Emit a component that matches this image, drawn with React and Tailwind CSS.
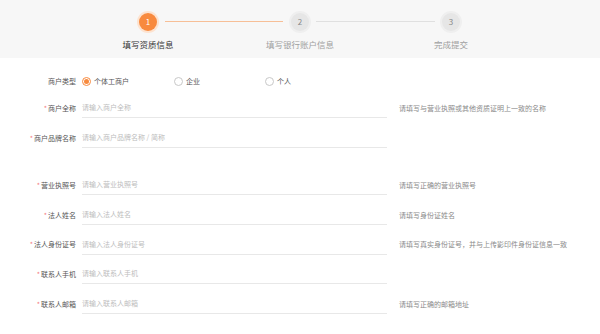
import React from "react";

const font = { fontFamily: '"Noto Sans CJK SC", "Noto Sans", sans-serif' };

function Step({ n, label, active }) {
  return (
    <div className="flex w-[22px] flex-col items-center">
      <div
        className={
          "flex h-[22px] w-[22px] items-center justify-center rounded-full " +
          (active ? "bg-[#fde3d0]" : "bg-[#efefef]")
        }
      >
        <div
          className={
            "flex h-[18px] w-[18px] items-center justify-center rounded-full text-[8px] " +
            (active ? "bg-[#f88a3e] text-white" : "bg-[#e6e6e6] text-[#888]")
          }
        >
          {n}
        </div>
      </div>
      <div
        className={
          "mt-[5px] whitespace-nowrap text-[8.5px] leading-[12px] " +
          (active ? "text-[#333]" : "text-[#a0a0a0]")
        }
      >
        {label}
      </div>
    </div>
  );
}

function Row({ label, required, placeholder, hint, h = "h-[30px]" }) {
  return (
    <div className={"flex items-center " + h}>
      <div className="w-[76px] text-right text-[7px] text-[#555]">
        {required && <span className="mr-[1px] text-[#f47c7c]">*</span>}
        {label}
      </div>
      <div className="ml-[6px] flex h-[20px] w-[305px] items-center border-b border-[#e8e8e8] text-[7px] text-[#bdbdbd]">
        {placeholder}
      </div>
      <div className="ml-[12px] text-[7px] text-[#8a8a8a]">{hint}</div>
    </div>
  );
}

function Radio({ label, checked }) {
  return (
    <div className="flex items-center">
      <div
        className={
          "flex h-[9px] w-[9px] items-center justify-center rounded-full border " +
          (checked ? "border-[#f88a3e]" : "border-[#c8c8c8]")
        }
      >
        {checked && <div className="h-[5px] w-[5px] rounded-full bg-[#f88a3e]" />}
      </div>
      <span className="ml-[3px] text-[7px] text-[#555]">{label}</span>
    </div>
  );
}

export default function App() {
  return (
    <div className="h-[334px] w-[600px] overflow-hidden bg-white" style={font}>
      <div className="h-[58px] bg-[#f7f7f7] pt-[11px]">
        <div className="ml-[137px] flex items-start">
          <Step n="1" label="填写资质信息" active />
          <div className="ml-[6px] mt-[10px] h-[1px] w-[118px] bg-[#f7bf97]" />
          <div className="ml-[6px]">
            <Step n="2" label="填写银行账户信息" />
          </div>
          <div className="ml-[5px] mt-[10px] h-[1px] w-[119px] bg-[#e0e0e0]" />
          <div className="ml-[5px]">
            <Step n="3" label="完成提交" />
          </div>
        </div>
      </div>

      <div className="pt-[11px]">
        <div className="flex h-[24px] items-center">
          <div className="w-[76px] text-right text-[7px] text-[#555]">商户类型</div>
          <div className="ml-[6px] flex items-center">
            <div className="w-[92px]">
              <Radio label="个体工商户" checked />
            </div>
            <div className="w-[91px]">
              <Radio label="企业" />
            </div>
            <Radio label="个人" />
          </div>
        </div>
        <Row
          label="商户全称"
          required
          placeholder="请输入商户全称"
          hint="请填写与营业执照或其他资质证明上一致的名称"
        />
        <Row label="商户品牌名称" required placeholder="请输入商户品牌名称 / 简称" />
        <div className="h-[17px]" />
        <Row
          label="营业执照号"
          required
          placeholder="请输入营业执照号"
          hint="请填写正确的营业执照号"
        />
        <Row
          label="法人姓名"
          required
          h="h-[29.7px]"
          placeholder="请输入法人姓名"
          hint="请填写身份证姓名"
        />
        <Row
          label="法人身份证号"
          required
          h="h-[29.7px]"
          placeholder="请输入法人身份证号"
          hint="请填写真实身份证号，并与上传影印件身份证信息一致"
        />
        <Row label="联系人手机" required h="h-[29.7px]" placeholder="请输入联系人手机" />
        <Row
          label="联系人邮箱"
          required
          h="h-[29.5px]"
          placeholder="请输入联系人邮箱"
          hint="请填写正确的邮箱地址"
        />
      </div>
    </div>
  );
}
